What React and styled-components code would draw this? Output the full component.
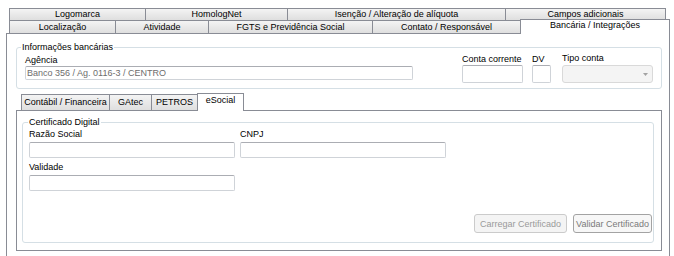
import React from "react"
import styled, { createGlobalStyle } from "styled-components"

const GlobalStyle = createGlobalStyle`
  body {
    margin: 0;
    background: #fff;
    font-family: "Liberation Sans", Arial, sans-serif;
    font-size: 9px;
    color: #000;
  }
`

const Page = styled.div`
  padding: 8px 0 0 6px;
  width: 664px;
`

const TabStrip = styled.div`
  display: flex;
  flex-direction: column;
  padding-left: ${p => p.$indent}px;
`

const TabRow = styled.div`
  display: flex;
  align-items: flex-start;
  height: ${p => p.$h}px;
`

const Tab = styled.div`
  box-sizing: border-box;
  flex: none;
  width: ${p => p.$w}px;
  height: ${p => (p.$active ? p.$h + 2 : p.$h)}px;
  margin-top: ${p => (p.$active ? -1 : 0)}px;
  margin-right: -1px;
  padding-top: ${p => (p.$active ? p.$pt || 0 : 0)}px;
  border: 1px solid #898c95;
  border-bottom: none;
  background: ${p =>
    p.$active ? "#fff" : "linear-gradient(#f4f4f4, #e9e9e9 50%, #dfdfdf)"};
  position: ${p => (p.$active ? "relative" : "static")};
  z-index: ${p => (p.$active ? 1 : "auto")};
  text-align: center;
  line-height: ${p => (p.$active ? 11 : p.$h - 1)}px;
  white-space: nowrap;
  overflow: hidden;
`

const Panel = styled.div`
  box-sizing: border-box;
  width: ${p => p.$w}px;
  border: 1px solid #898c95;
  background: #fff;
  padding: ${p => p.$pad};
`

const Group = styled.fieldset`
  box-sizing: border-box;
  width: ${p => p.$w}px;
  min-width: 0;
  margin: 0;
  padding: 0;
  border: 1px solid #d5dfe5;
  border-radius: 3px;
`

const Legend = styled.legend`
  margin-left: ${p => p.$ml}px;
  padding: 0 1px;
  line-height: 11px;
  font-size: 9px;
`

const GroupBody = styled.div`
  padding: ${p => p.$pad};
`

const FieldRow = styled.div`
  display: flex;
  align-items: flex-start;
`

const Field = styled.div`
  display: flex;
  flex-direction: column;
  width: ${p => p.$w}px;
  margin-left: ${p => p.$ml || 0}px;
  margin-top: ${p => p.$mt || 0}px;
`

const FieldGrid = styled.div`
  display: grid;
  grid-template-columns: 206px 206px;
  column-gap: 5px;
  row-gap: 4px;
`

const Label = styled.div`
  line-height: 11px;
  margin-bottom: ${p => p.$gap || 0}px;
  white-space: nowrap;
`

const TextBox = styled.input`
  box-sizing: border-box;
  width: 100%;
  height: ${p => p.$h}px;
  margin: 0;
  padding: 0 1px;
  border: 1px solid #cfd3d8;
  border-top-color: #abadb3;
  border-radius: 2px;
  background: #fff;
  font: inherit;
  font-size: 9px;
  color: #6d6d6d;
  outline: none;
`

const Combo = styled.div`
  box-sizing: border-box;
  display: flex;
  align-items: center;
  justify-content: flex-end;
  height: 18px;
  padding-right: 4px;
  border: 1px solid #d9d9d9;
  border-radius: 3px;
  background: #f4f4f4;
`

const ButtonRow = styled.div`
  display: flex;
  justify-content: flex-end;
  gap: 6px;
  margin-top: 23px;
`

const Button = styled.button`
  box-sizing: border-box;
  width: ${p => p.$w}px;
  height: 19px;
  margin: 0;
  padding: 0;
  border: 1px solid ${p => (p.$dim ? "#cbcbcb" : "#a3a3a3")};
  border-radius: 3px;
  background: ${p => (p.$dim ? "#f4f4f4" : "#f7f7f7")};
  font: inherit;
  font-size: 9px;
  color: ${p => (p.$dim ? "#9a9a9a" : "#7a7a7a")};
  white-space: nowrap;
`

const InnerTabs = styled.div`
  margin-top: 5px;
`

const outerRow1 = [
  ["Logomarca", 137],
  ["HomologNet", 143],
  ["Isenção / Alteração de alíquota", 219],
  ["Campos adicionais", 161],
]

const outerRow2 = [
  ["Localização", 107],
  ["Atividade", 94],
  ["FGTS e Previdência Social", 165],
  ["Contato / Responsável", 149],
  ["Bancária / Integrações", 150, true],
]

const innerTabs = [
  ["Contábil / Financeira", 89],
  ["GAtec", 43],
  ["PETROS", 47],
  ["eSocial", 47, true],
]

export default function App() {
  return (
    <Page>
      <GlobalStyle />
      <TabStrip $indent={3}>
        <TabRow $h={12}>
          {outerRow1.map(([name, w]) => (
            <Tab key={name} $w={w} $h={12}>
              {name}
            </Tab>
          ))}
        </TabRow>
        <TabRow $h={13}>
          {outerRow2.map(([name, w, active]) => (
            <Tab key={name} $w={w} $h={13} $active={active}>
              {name}
            </Tab>
          ))}
        </TabRow>
      </TabStrip>
      <Panel $w={664} $pad="8px 0 12px 9px">
        <Group $w={646}>
          <Legend $ml={4}>Informações bancárias</Legend>
          <GroupBody $pad="1px 8px 5px 8px">
            <FieldRow>
              <Field $w={388} $mt={1}>
                <Label>Agência</Label>
                <TextBox $h={14} readOnly value="Banco 356 / Ag. 0116-3 / CENTRO" />
              </Field>
              <Field $w={61} $ml={49}>
                <Label>Conta corrente</Label>
                <TextBox $h={18} readOnly value="" />
              </Field>
              <Field $w={19} $ml={9}>
                <Label>DV</Label>
                <TextBox $h={18} readOnly value="" />
              </Field>
              <Field $w={91} $ml={11} $mt={-1}>
                <Label $gap={1}>Tipo conta</Label>
                <Combo>
                  <svg width="5" height="3" viewBox="0 0 5 3">
                    <path d="M0 0h5L2.5 3z" fill="#a2a2a2" />
                  </svg>
                </Combo>
              </Field>
            </FieldRow>
          </GroupBody>
        </Group>
        <InnerTabs>
          <TabStrip $indent={5}>
            <TabRow $h={16}>
              {innerTabs.map(([name, w, active]) => (
                <Tab key={name} $w={w} $h={16} $active={active} $pt={1}>
                  {name}
                </Tab>
              ))}
            </TabRow>
          </TabStrip>
          <Panel $w={646} $pad="6px 7px 7px 5px">
            <Group $w={632}>
              <Legend $ml={5}>Certificado Digital</Legend>
              <GroupBody $pad="1px 1px 9px 6px">
                <FieldGrid>
                  <Field>
                    <Label $gap={2}>Razão Social</Label>
                    <TextBox $h={16} readOnly value="" />
                  </Field>
                  <Field>
                    <Label $gap={2}>CNPJ</Label>
                    <TextBox $h={16} readOnly value="" />
                  </Field>
                  <Field>
                    <Label $gap={2}>Validade</Label>
                    <TextBox $h={16} readOnly value="" />
                  </Field>
                </FieldGrid>
                <ButtonRow>
                  <Button $w={93} $dim disabled>
                    Carregar Certificado
                  </Button>
                  <Button $w={79}>Validar Certificado</Button>
                </ButtonRow>
              </GroupBody>
            </Group>
          </Panel>
        </InnerTabs>
      </Panel>
    </Page>
  )
}
